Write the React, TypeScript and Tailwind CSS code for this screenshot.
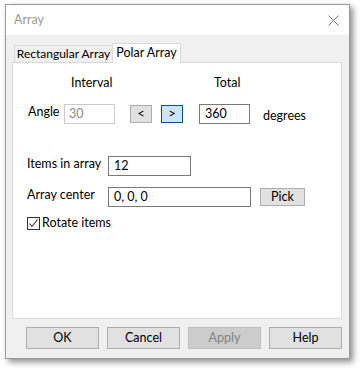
import React from "react";

const font = { fontFamily: 'Lato, "Noto Sans", sans-serif' };

function Btn({ label, disabled }: { label: string; disabled?: boolean }) {
  return (
    <div
      className={
        "w-[73px] h-[22px] flex items-center justify-center border text-[12.5px] " +
        (disabled
          ? "bg-[#cccccc] border-[#bfbfbf] text-[#838383]"
          : "bg-[#e1e1e1] border-[#adadad] text-black")
      }
    >
      {label}
    </div>
  );
}

export default function App() {
  return (
    <div className="w-[361px] h-[369px] bg-white pt-[4px] pl-[5px] whitespace-nowrap" style={font}>
      <div className="w-[345px] h-[355px] border border-[#9a9a9a] bg-[#f0f0f0] flex flex-col shadow-[3px_3px_6px_rgba(0,0,0,0.45)]">
        {/* title bar */}
        <div className="h-[30px] bg-white flex items-center justify-between pl-[8px] pr-[10px]">
          <span className="text-[12.5px] text-[#999999]">Array</span>
          <svg width="11" height="11" viewBox="0 0 11 11">
            <path d="M0.5 0.5 L10.5 10.5 M10.5 0.5 L0.5 10.5" stroke="#777" strokeWidth="1" />
          </svg>
        </div>
        {/* body */}
        <div className="flex-1 flex flex-col px-[6px] pt-[8px]">
          {/* tabs */}
          <div className="flex items-end h-[19px] pl-[2px] relative z-10">
            <div className="h-[17px] w-[99px] border border-b-0 border-[#d9d9d9] bg-[#f0f0f0] text-[12px] flex items-center justify-center">
              Rectangular Array
            </div>
            <div className="h-[20px] w-[69px] -mb-[1px] border border-b-0 border-[#d9d9d9] bg-white text-[12.5px] flex items-center justify-center -ml-px">
              Polar Array
            </div>
          </div>
          {/* panel */}
          <div className="h-[257px] w-[330px] bg-white border border-[#d9d9d9] flex flex-col text-[12.5px] text-black">
            <div className="flex h-[20px] mt-[10px] items-center">
              <span className="ml-[58px] w-[50px]">Interval</span>
              <span className="ml-[93px]">Total</span>
            </div>
            <div className="flex items-center mt-[11px] h-[20px]">
              <span className="ml-[15px] w-[36px] -mt-[3px]">Angle</span>
              <div className="w-[51px] h-[20px] border border-[#cccccc] text-[#8a8a8a] pl-[4px] flex items-center">30</div>
              <div className="ml-[15px] w-[22px] h-[18px] bg-[#e1e1e1] border border-[#adadad] flex items-center justify-center text-[13px] pb-[1px]">&lt;</div>
              <div className="ml-[9px] w-[22px] h-[18px] bg-[#cce4f7] border border-[#005499] flex items-center justify-center text-[13px] pb-[1px]">&gt;</div>
              <div className="ml-[16px] w-[51px] h-[20px] border border-[#7a7a7a] pl-[5px] flex items-center">360</div>
              <span className="ml-[13px] mt-[4px]">degrees</span>
            </div>
            <div className="flex items-center mt-[32px] h-[20px]">
              <span className="ml-[14px] w-[81px] -mt-[3px]">Items in array</span>
              <div className="w-[83px] h-[20px] border border-[#7a7a7a] pl-[5px] flex items-center">12</div>
            </div>
            <div className="flex items-center mt-[11px] h-[20px]">
              <span className="ml-[14px] w-[81px] -mt-[3px]">Array center</span>
              <div className="w-[143px] h-[20px] border border-[#7a7a7a] pl-[5px] flex items-center">0, 0, 0</div>
              <div className="ml-[9px] w-[45px] h-[18px] bg-[#e1e1e1] border border-[#adadad] flex items-center justify-center">Pick</div>
            </div>
            <div className="flex items-center mt-[9px] h-[14px]">
              <div className="ml-[14px] w-[13px] h-[13px] border border-[#333333] flex items-center justify-center">
                <svg width="11" height="11" viewBox="0 0 11 11">
                  <path d="M1.5 5.5 L4 8.5 L9.5 1.5" stroke="#666" strokeWidth="1.3" fill="none" />
                </svg>
              </div>
              <span className="ml-[2px]">Rotate items</span>
            </div>
          </div>
          {/* buttons */}
          <div className="flex gap-[8px] mt-[8px] pl-[14px]">
            <Btn label="OK" />
            <Btn label="Cancel" />
            <Btn label="Apply" disabled />
            <Btn label="Help" />
          </div>
        </div>
      </div>
    </div>
  );
}
